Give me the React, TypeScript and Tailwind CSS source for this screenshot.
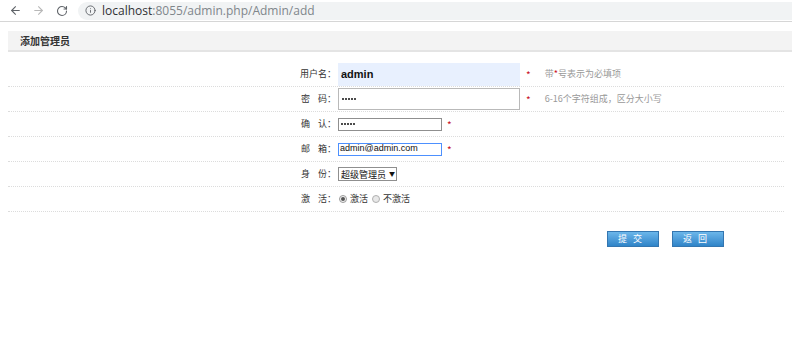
import React from 'react';
import { ArrowLeft, ArrowRight, RotateCw, Info } from 'lucide-react';

const font = { fontFamily: '"Noto Sans CJK SC", "Noto Sans", sans-serif' };

const Row: React.FC<{ label: React.ReactNode; children: React.ReactNode }> = ({ label, children }) => (
  <div className="flex h-[25px] items-center border-b border-dotted border-[#dcdcdc]">
    <div className="w-[330px] shrink-0 pr-[2px] text-right text-[9px] text-[#333]">{label}</div>
    <div className="flex items-center">{children}</div>
  </div>
);

const Star: React.FC<{ className?: string }> = ({ className = '' }) => (
  <span className={`text-[10px] text-[#c8101e] ${className}`}>*</span>
);

const Dots: React.FC = () => (
  <span className="flex items-center gap-[1px]">
    {[0, 1, 2, 3, 4].map((i) => (
      <span key={i} className="h-[2px] w-[2px] rounded-full bg-[#111]" />
    ))}
  </span>
);

export default function App() {
  return (
    <div className="h-[350px] w-[792px] overflow-hidden bg-white" style={font}>
      {/* browser bar */}
      <div className="flex h-[22px] items-center border-b border-[#d6d6d6] bg-white">
        <ArrowLeft size={13} strokeWidth={2} className="ml-[9px] text-[#5f6368]" />
        <ArrowRight size={13} strokeWidth={2} className="ml-[10px] text-[#b8b8b8]" />
        <RotateCw size={12} strokeWidth={2.2} className="ml-[11px] text-[#5f6368]" />
        <div className="ml-[10px] flex h-[18px] flex-1 items-center rounded-l-full bg-[#f1f3f4] pl-[7px]">
          <Info size={11} strokeWidth={2} className="text-[#5f6368]" />
          <span className="ml-[6px] text-[12px] font-normal leading-none text-[#303134]" style={{ fontFamily: '"Open Sans", "Liberation Sans", sans-serif' }}>
            localhost<span className="text-[#80868b]">:8055/admin.php/Admin/add</span>
          </span>
        </div>
      </div>

      {/* title */}
      <div className="ml-[8px] mt-[9px] flex h-[21px] items-center border-b-2 border-[#e4e4e4] bg-[#f3f3f3] pl-[12px] text-[10px] font-bold text-[#333]">
        添加管理员
      </div>

      {/* form */}
      <div className="ml-[8px] mt-[10px] mr-[8px]">
        <Row label="用户名：">
          <div className="flex h-[23px] w-[182px] items-center bg-[#e8f0fe] pl-[3px] text-[11px] font-bold text-[#111]" style={{ fontFamily: '"Liberation Sans", sans-serif' }}>
            admin
          </div>
          <Star className="ml-[6px]" />
          <span className="ml-[14px] text-[9px] text-[#999]">
            带<span className="text-[#c8101e]">*</span>号表示为必填项
          </span>
        </Row>
        <Row label={<>密&nbsp;&nbsp;&nbsp;&nbsp;码：</>}>
          <div className="flex h-[22px] w-[182px] items-center border border-[#b9b9b9] pl-[3px]">
            <Dots />
          </div>
          <Star className="ml-[6px]" />
          <span className="ml-[14px] text-[9px] text-[#999]">6-16个字符组成，区分大小写</span>
        </Row>
        <Row label={<>确&nbsp;&nbsp;&nbsp;&nbsp;认：</>}>
          <div className="flex h-[13px] w-[104px] items-center border border-[#8f8f8f] pl-[2px]">
            <Dots />
          </div>
          <Star className="ml-[5px]" />
        </Row>
        <Row label={<>邮&nbsp;&nbsp;&nbsp;&nbsp;箱：</>}>
          <div className="flex h-[13px] w-[104px] items-center border border-[#4d90fe] pl-[1px] text-[9px] text-[#111]" style={{ fontFamily: '"Liberation Sans", sans-serif' }}>
            admin@admin.com
          </div>
          <Star className="ml-[5px]" />
        </Row>
        <Row label={<>身&nbsp;&nbsp;&nbsp;&nbsp;份：</>}>
          <div className="flex h-[14px] w-[59px] items-center whitespace-nowrap border border-[#8f8f8f] pl-[2px] text-[9px] leading-none text-[#111]">
            超级管理员
            <span className="ml-[3px] text-[6px]">▼</span>
          </div>
        </Row>
        <Row label={<>激&nbsp;&nbsp;&nbsp;&nbsp;活：</>}>
          <span className="ml-[1px] flex h-[8px] w-[8px] items-center justify-center rounded-full border border-[#9a9a9a] bg-[#f4f4f4]">
            <span className="h-[4px] w-[4px] rounded-full bg-[#555]" />
          </span>
          <span className="ml-[3px] text-[9px] text-[#333]">激活</span>
          <span className="ml-[4px] h-[8px] w-[8px] rounded-full border border-[#b0b0b0] bg-[#e8e8e8]" />
          <span className="ml-[3px] text-[9px] text-[#333]">不激活</span>
        </Row>
      </div>

      {/* buttons */}
      <div className="mt-[19px] flex pl-[607px]">
        <button className="flex h-[16px] w-[52px] items-center justify-center border border-[#3476b0] bg-gradient-to-b from-[#6bb6ea] to-[#2f84c8] text-[9px] tracking-[6px] text-white">
          提交
        </button>
        <button className="ml-[13px] flex h-[16px] w-[52px] items-center justify-center border border-[#3476b0] bg-gradient-to-b from-[#6bb6ea] to-[#2f84c8] text-[9px] tracking-[6px] text-white">
          返回
        </button>
      </div>
    </div>
  );
}
